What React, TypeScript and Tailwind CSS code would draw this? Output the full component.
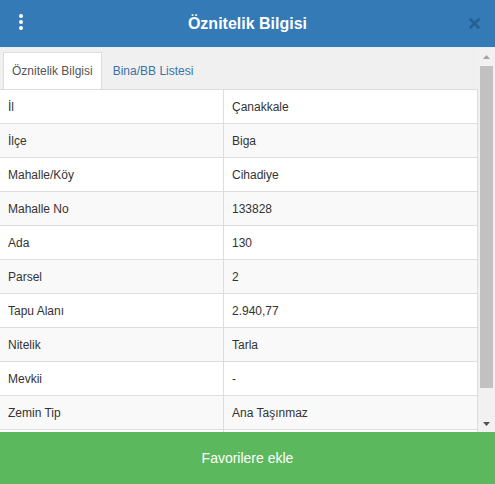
import React from "react";

const rows: [string, string][] = [
  ["İl", "Çanakkale"],
  ["İlçe", "Biga"],
  ["Mahalle/Köy", "Cihadiye"],
  ["Mahalle No", "133828"],
  ["Ada", "130"],
  ["Parsel", "2"],
  ["Tapu Alanı", "2.940,77"],
  ["Nitelik", "Tarla"],
  ["Mevkii", "-"],
  ["Zemin Tip", "Ana Taşınmaz"],
  ["", ""],
];

export default function App() {
  return (
    <div className="w-[495px] h-[484px] flex flex-col overflow-hidden font-['Liberation_Sans',Arial,sans-serif] text-[#333]">
      <div className="h-[47px] shrink-0 bg-[#337ab7] relative flex items-center justify-center">
        <div className="absolute left-[19px] top-[14px] flex flex-col gap-[2px]">
          <span className="block w-[4px] h-[4px] rounded-full bg-white" />
          <span className="block w-[4px] h-[4px] rounded-full bg-white" />
          <span className="block w-[4px] h-[4px] rounded-full bg-white" />
        </div>
        <span className="text-white text-[16px] font-bold">Öznitelik Bilgisi</span>
        <svg className="absolute left-[469px] top-[18px]" width="11" height="11" viewBox="0 0 11 11">
          <path d="M1.5 1.5 L9.5 9.5 M9.5 1.5 L1.5 9.5" stroke="rgba(0,0,0,0.22)" strokeWidth="2.6" strokeLinecap="round" />
        </svg>
      </div>
      <div className="h-[385px] shrink-0 flex bg-[#f0f0f0] overflow-hidden border-t border-[#e6eef6]">
        <div className="w-[478px] flex flex-col pt-[4px]">
          <div className="h-[37px] shrink-0 flex items-stretch pl-[3px] text-[12px]">
            <div className="bg-white border border-b-0 border-[#ddd] px-[8px] flex items-center text-[#555]">Öznitelik Bilgisi</div>
            <div className="ml-[3px] px-[8px] flex items-center text-[#3a72a8]">Bina/BB Listesi</div>
          </div>
          <div className="border-t border-r border-[#ddd] bg-white text-[12px]">
            {rows.map(([k, v], i) => (
              <div key={i} className={`flex h-[34px] border-b border-[#ddd] ${i % 2 === 1 ? "bg-[#f9f9f9]" : "bg-white"}`}>
                <div className="w-[224px] shrink-0 px-[8px] flex items-center border-r border-[#ddd]">{k}</div>
                <div className="flex-1 px-[8px] flex items-center">{v}</div>
              </div>
            ))}
          </div>
        </div>
        <div className="w-[17px] shrink-0 bg-[#f1f1f1] flex flex-col">
          <div className="h-[17px] flex items-center justify-center">
            <svg width="7" height="4" viewBox="0 0 7 4"><path d="M0 4 L3.5 0 L7 4 Z" fill="#a3a3a3" /></svg>
          </div>
          <div className="mx-[2px] mt-[1px] h-[322px] bg-[#c1c1c1]" />
          <div className="flex-1" />
          <div className="h-[17px] flex items-center justify-center">
            <svg width="7" height="4" viewBox="0 0 7 4"><path d="M0 0 L3.5 4 L7 0 Z" fill="#505050" /></svg>
          </div>
        </div>
      </div>
      <div className="h-[52px] shrink-0 bg-[#5cb85c] flex items-center justify-center text-white text-[14px]">
        Favorilere ekle
      </div>
    </div>
  );
}
